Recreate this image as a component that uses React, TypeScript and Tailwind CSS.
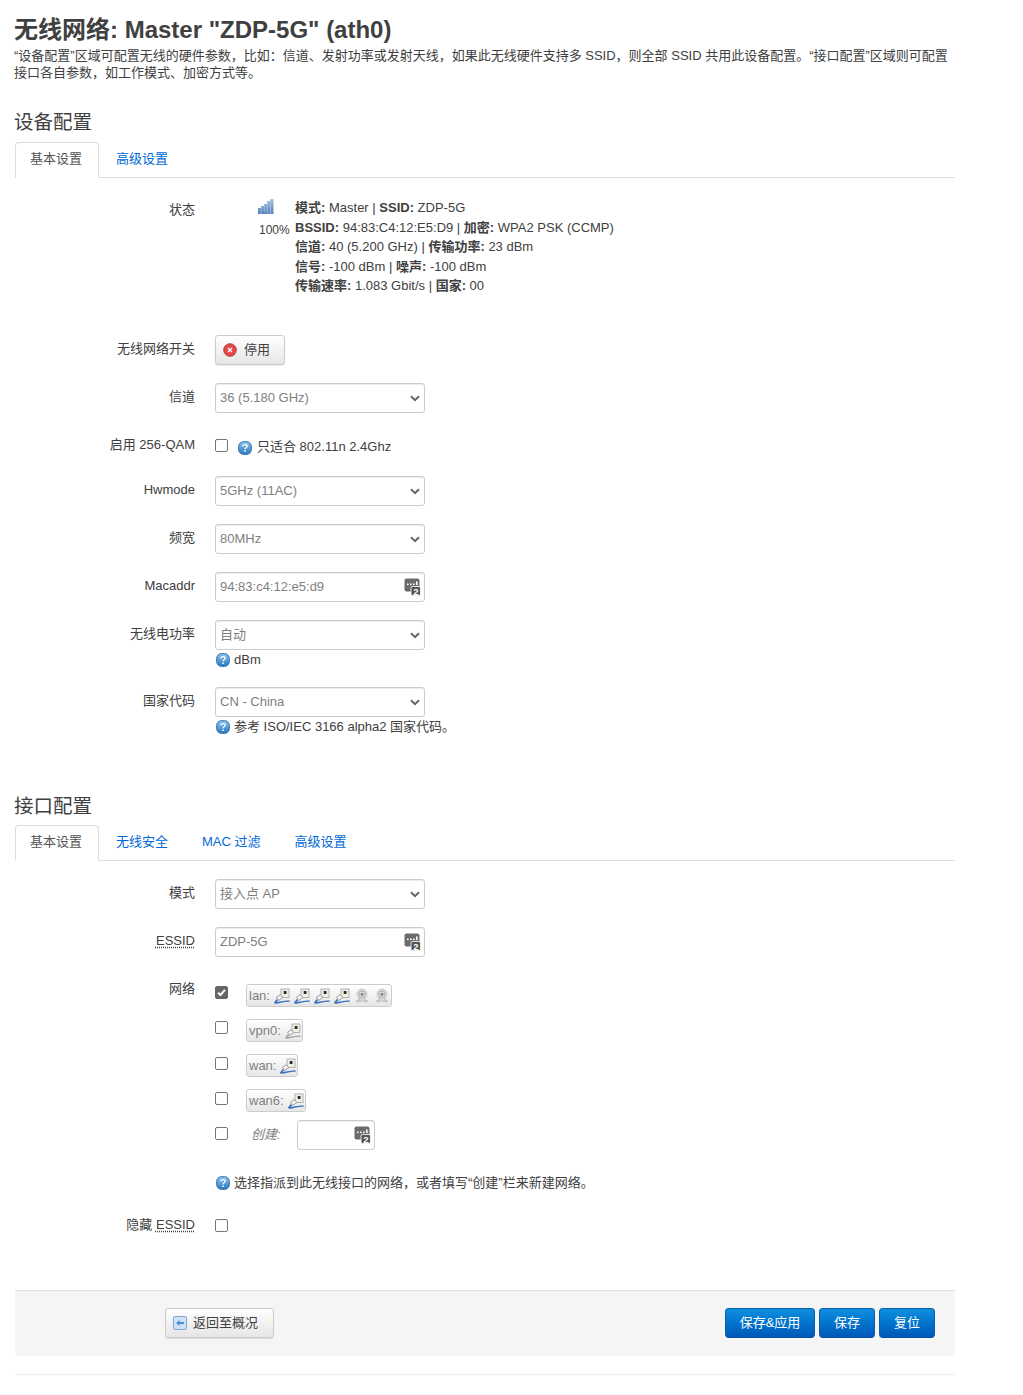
import React from "react";

const FONT = "font-['Liberation_Sans','Noto_Sans_CJK_SC',sans-serif]";

function HelpIcon({ className = "" }: { className?: string }) {
  return (
    <svg width="14" height="14" viewBox="0 0 14 14" className={`shrink-0 ${className}`}>
      <defs>
        <linearGradient id="hg" x1="0" y1="0" x2="0" y2="1">
          <stop offset="0" stopColor="#8cc4ee" />
          <stop offset="1" stopColor="#2a78c0" />
        </linearGradient>
      </defs>
      <rect x="0.6" y="0.6" width="12.8" height="12.8" rx="5" fill="url(#hg)" stroke="#2a6ca8" strokeWidth="0.9" />
      <path d="M4.9 5.5c.1-1.3 1-1.9 2.1-1.9 1.2 0 2.1.7 2.1 1.7 0 1.5-2 1.5-2 2.9" fill="none" stroke="#fff" strokeWidth="1.4" />
      <rect x="6.2" y="9.4" width="1.6" height="1.5" fill="#fff" />
    </svg>
  );
}

function DynIcon({ className = "" }: { className?: string }) {
  return (
    <svg width="17" height="18" viewBox="0 0 17 18" className={className}>
      <rect x="0.5" y="0.5" width="15" height="13" rx="2" fill="#6b6b6b" />
      <rect x="3" y="5.5" width="1.6" height="1.6" fill="#fff" />
      <rect x="6" y="5.5" width="1.6" height="1.6" fill="#fff" />
      <rect x="9" y="5.5" width="1.6" height="1.6" fill="#fff" />
      <rect x="12" y="3.5" width="1.6" height="3.6" fill="#fff" />
      <rect x="7" y="8.5" width="9.5" height="9" rx="1.5" fill="#555" stroke="#fff" strokeWidth="0.8" />
      <text x="11.8" y="16.6" textAnchor="middle" fontSize="9.5" fontWeight="700" fill="#fff" fontFamily="Liberation Sans">2</text>
    </svg>
  );
}

function PortIcon({ grey = false }: { grey?: boolean }) {
  const c = grey ? "#a8a8a8" : "#3f74c4";
  return (
    <svg width="16" height="16" viewBox="0 0 16 16" className="shrink-0">
      <rect x="7" y="1" width="8" height="8.5" fill="#eef0e4" stroke="#a2a2a2" strokeWidth="0.8" />
      <rect x="9.7" y="3" width="2.8" height="3" fill="#2c2c2c" />
      <rect x="3.2" y="7.6" width="4.8" height="3.8" fill="#f6f6f6" stroke="#8e8e8e" strokeWidth="0.8" transform="rotate(-35 5.6 9.5)" />
      <path d="M3.4 11.6 1 14.6c3.2 1 5.4-1.4 14.6-1.6" fill="none" stroke={c} strokeWidth="1.7" />
    </svg>
  );
}

function WifiIcon() {
  return (
    <svg width="16" height="16" viewBox="0 0 16 16" className="shrink-0">
      <circle cx="8" cy="6.2" r="5" fill="#dedede" stroke="#c8c8c8" />
      <circle cx="8" cy="6.2" r="3.2" fill="none" stroke="#aeaeae" />
      <circle cx="8" cy="6.2" r="1.5" fill="#848484" />
      <path d="M6 9.5 3.5 14.5M10 9.5l2.5 5M2 13h12" fill="none" stroke="#b4b4b4" strokeWidth="1.1" />
    </svg>
  );
}

function Chevron() {
  return (
    <svg width="10" height="7" viewBox="0 0 10 7" className="absolute right-[5px] top-[12px] pointer-events-none">
      <path d="M1 1.2 5 5.2 9 1.2" fill="none" stroke="#666" strokeWidth="2" />
    </svg>
  );
}

function Sel({ value }: { value: string }) {
  return (
    <div className="relative w-[210px] h-[30px]">
      <select
        defaultValue={value}
        className="w-full h-full appearance-none bg-white border border-[#ccc] rounded-[3px] pl-1 pr-5 text-[13px] text-[#808080] shadow-[inset_0_1px_1px_rgba(0,0,0,0.075)]"
      >
        <option>{value}</option>
      </select>
      <Chevron />
    </div>
  );
}

function TextInput({ value, w = "w-[210px]" }: { value: string; w?: string }) {
  return (
    <div className={`relative ${w} h-[30px] bg-white border border-[#ccc] rounded-[3px] pl-1 text-[13px] leading-[27px] text-[#808080] shadow-[inset_0_1px_1px_rgba(0,0,0,0.075)]`}>
      {value}
      <DynIcon className="absolute right-[3px] top-[5px]" />
    </div>
  );
}

function Check({ checked = false }: { checked?: boolean }) {
  return (
    <span className={`relative block w-[13px] h-[13px] shrink-0 rounded-[2px] border ${checked ? "bg-[#666] border-[#666]" : "bg-white border-[#767676]"}`}>
      {checked && (
        <svg width="11" height="11" viewBox="0 0 11 11" className="absolute left-0 top-0">
          <path d="M2 5.6 4.4 8 9 2.8" fill="none" stroke="#fff" strokeWidth="2" />
        </svg>
      )}
    </span>
  );
}

function Row({ label, children, className = "", labelClass = "" }: { label: React.ReactNode; children: React.ReactNode; className?: string; labelClass?: string }) {
  return (
    <div className={`flex ${className}`}>
      <div className={`w-[180px] shrink-0 text-right text-[13px] leading-[20px] text-[#404040] pt-1 ${labelClass}`}>{label}</div>
      <div className="ml-5 min-w-0">{children}</div>
    </div>
  );
}

function Tabs({ items }: { items: string[] }) {
  return (
    <div className="flex h-9 mt-2 border-b border-[#ddd] text-[13px]">
      {items.map((t, i) =>
        i === 0 ? (
          <div key={t} className="h-9 pl-[14px] pr-[16px] mr-[2px] border border-[#ddd] border-b-white rounded-t-[4px] bg-white text-[#555] leading-[31px]">
            {t}
          </div>
        ) : (
          <div key={t} className="h-9 pl-[15px] pr-[17px] mr-[2px] text-[#0069d6] leading-[33px]">
            {t}
          </div>
        )
      )}
    </div>
  );
}

function Help({ text, className = "" }: { text: string; className?: string }) {
  return (
    <div className={`flex items-center h-[18px] pt-[2px] pl-px text-[13px] text-[#404040] ${className}`}>
      <HelpIcon />
      <span className="ml-1">{text}</span>
    </div>
  );
}

function NetTag({ label, children, className = "" }: { label: string; children: React.ReactNode; className?: string }) {
  return (
    <div className={`flex items-center h-[23px] pl-[2px] pr-[1px] rounded-[3px] border border-[#ccc] bg-gradient-to-b from-white to-[#e6e6e6] text-[13px] text-[#808080] ${className}`}>
      <span className="mr-1">{label}</span>
      <div className="flex gap-1">{children}</div>
    </div>
  );
}

function NetRow({ checked, children, className = "", boxClass = "mt-[2px]" }: { checked?: boolean; children: React.ReactNode; className?: string; boxClass?: string }) {
  return (
    <div className={`flex items-start h-[23px] ${className}`}>
      <div className={`${boxClass} w-[31px]`}>
        <Check checked={checked} />
      </div>
      {children}
    </div>
  );
}

function StatusLine({ children }: { children: React.ReactNode }) {
  return <div className="h-[19.6px] leading-[19.6px]">{children}</div>;
}

function BlueBtn({ label, w }: { label: string; w: string }) {
  return (
    <button className={`${w} h-[30px] rounded-[4px] border border-[#0a5fae] border-b-[#0050a0] bg-gradient-to-b from-[#0f8fe0] to-[#0058b8] text-white text-[13px] text-center`}>
      {label}
    </button>
  );
}

export default function App() {
  return (
    <div className={`${FONT} w-[1023px] h-[1395px] bg-white px-[15px] pt-[17px] text-[#404040]`}>
      <div className="w-[940px]">
        <h1 className="-ml-px text-[24px] leading-[26px] font-bold text-[#404040]">无线网络: Master "ZDP-5G" (ath0)</h1>
        <p className="-ml-px mt-1 text-[13px] leading-[17px] text-[#404040]">
          “设备配置”区域可配置无线的硬件参数，比如：信道、发射功率或发射天线，如果此无线硬件支持多 SSID，则全部 SSID 共用此设备配置。“接口配置”区域则可配置接口各自参数，如工作模式、加密方式等。
        </p>

        <h3 className="-ml-px mt-[29px] text-[19.5px] leading-6 text-[#404040]">设备配置</h3>
        <Tabs items={["基本设置", "高级设置"]} />

        <Row label="状态" className="mt-5 h-[119px]" labelClass="!pt-[2px]">
          <div className="flex">
            <div className="w-[80px] shrink-0 pl-[43px]">
              <svg width="16" height="16" viewBox="0 0 16 16" className="block">
                <defs>
                  <linearGradient id="sg" x1="0" y1="0" x2="0" y2="1">
                    <stop offset="0" stopColor="#a6c2e2" />
                    <stop offset="1" stopColor="#5584bd" />
                  </linearGradient>
                </defs>
                <path d="M0 10h3V8h3V6h3V3h3V1h3.5v15H0z" fill="url(#sg)" />
                <path d="M3.2 8v8M6.3 6v8M9.4 3v13M12.5 1v15" stroke="#c3d5ea" strokeWidth="0.5" />
              </svg>
              <div className="mt-[9px] ml-px text-[12px] leading-[14px] whitespace-nowrap text-[#404040]">100%</div>
            </div>
            <div className="text-[13px] whitespace-nowrap text-[#404040]">
              <StatusLine><b>模式:</b> Master | <b>SSID:</b> ZDP-5G</StatusLine>
              <StatusLine><b>BSSID:</b> 94:83:C4:12:E5:D9 | <b>加密:</b> WPA2 PSK (CCMP)</StatusLine>
              <StatusLine><b>信道:</b> 40 (5.200 GHz) | <b>传输功率:</b> 23 dBm</StatusLine>
              <StatusLine><b>信号:</b> -100 dBm | <b>噪声:</b> -100 dBm</StatusLine>
              <StatusLine><b>传输速率:</b> 1.083 Gbit/s | <b>国家:</b> 00</StatusLine>
            </div>
          </div>
        </Row>

        <Row label="无线网络开关" className="mt-[18px]">
          <button className="flex items-center w-[70px] h-[30px] pl-[7px] rounded-[3px] border border-[#ccc] bg-gradient-to-b from-white to-[#e6e6e6] shadow-[0_1px_1px_rgba(0,0,0,0.08)] text-[13px] text-[#404040]">
            <svg width="14" height="14" viewBox="0 0 14 14">
              <circle cx="7" cy="7" r="6.3" fill="#e04a4a" stroke="#a82a2a" strokeWidth="0.8" />
              <path d="M5 5l4 4M9 5l-4 4" stroke="#fff" strokeWidth="1.2" />
            </svg>
            <span className="ml-[7px]">停用</span>
          </button>
        </Row>

        <Row label="信道" className="mt-[18px]"><Sel value="36 (5.180 GHz)" /></Row>

        <Row label="启用 256-QAM" className="mt-[18px] h-[27px]">
          <div className="flex items-start pt-2">
            <Check />
            <HelpIcon className="ml-[10px] mt-[2px]" />
            <span className="ml-[5px] text-[13px] leading-[18px] -mt-[1px] text-[#404040] whitespace-nowrap">只适合 802.11n 2.4Ghz</span>
          </div>
        </Row>

        <Row label="Hwmode" className="mt-[18px]"><Sel value="5GHz (11AC)" /></Row>
        <Row label="频宽" className="mt-[18px]"><Sel value="80MHz" /></Row>
        <Row label="Macaddr" className="mt-[18px]"><TextInput value="94:83:c4:12:e5:d9" /></Row>
        <Row label="无线电功率" className="mt-[18px]">
          <Sel value="自动" />
          <Help text="dBm" />
        </Row>
        <Row label="国家代码" className="mt-[19px]">
          <Sel value="CN - China" />
          <Help text="参考 ISO/IEC 3166 alpha2 国家代码。" className="whitespace-nowrap" />
        </Row>

        <h3 className="-ml-px mt-[59px] -mb-px text-[19.5px] leading-6 text-[#404040]">接口配置</h3>
        <Tabs items={["基本设置", "无线安全", "MAC 过滤", "高级设置"]} />

        <Row label="模式" className="mt-[18px]"><Sel value="接入点 AP" /></Row>
        <Row label={<span className="underline decoration-dotted underline-offset-2">ESSID</span>} className="mt-[18px]">
          <TextInput value="ZDP-5G" />
        </Row>
        <Row label="网络" className="mt-[18px]">
          <div className="pt-[9px]">
            <NetRow checked>
              <NetTag label="lan:">
                <PortIcon /><PortIcon /><PortIcon /><PortIcon /><WifiIcon /><WifiIcon />
              </NetTag>
            </NetRow>
            <NetRow className="mt-3">
              <NetTag label="vpn0:"><PortIcon grey /></NetTag>
            </NetRow>
            <NetRow className="mt-3" boxClass="mt-[3px]">
              <NetTag label="wan:"><PortIcon /></NetTag>
            </NetRow>
            <NetRow className="mt-3" boxClass="mt-[3px]">
              <NetTag label="wan6:"><PortIcon /></NetTag>
            </NetRow>
            <div className="flex mt-2 h-[30px]">
              <div className="mt-[7px] w-[36px]"><Check /></div>
              <i className="w-[46px] text-[13px] leading-[30px] text-[#808080]">创建:</i>
              <TextInput value="" w="w-[78px]" />
            </div>
            <Help text="选择指派到此无线接口的网络，或者填写“创建”栏来新建网络。" className="mt-[23px] whitespace-nowrap" />
          </div>
        </Row>
        <Row label={<>隐藏 <span className="underline decoration-dotted underline-offset-2">ESSID</span></>} className="mt-[20px]" labelClass="">
          <div className="pt-2"><Check /></div>
        </Row>

        <div className="mt-[55px] h-[66px] flex items-start justify-between bg-[#f5f5f5] border-t border-[#ddd] rounded-b-[3px] pt-[17px] pl-[150px] pr-5">
          <button className="flex items-center w-[109px] h-[30px] pl-[7px] rounded-[3px] border border-[#ccc] bg-gradient-to-b from-white to-[#e6e6e6] shadow-[0_1px_1px_rgba(0,0,0,0.1)] text-[13px] text-[#404040]">
            <svg width="14" height="14" viewBox="0 0 14 14">
              <rect x="0.5" y="0.5" width="13" height="13" rx="1.5" fill="#cfe2f5" stroke="#7fa6cf" />
              <path d="M3 7l3.5-3v2h4.5v2h-4.5v2z" fill="#4a90d0" />
            </svg>
            <span className="ml-[6px] whitespace-nowrap">返回至概况</span>
          </button>
          <div className="flex gap-1">
            <BlueBtn label="保存&应用" w="w-[90px]" />
            <BlueBtn label="保存" w="w-[56px]" />
            <BlueBtn label="复位" w="w-[56px]" />
          </div>
        </div>

        <div className="mt-[18px] h-px bg-[#eee]" />
      </div>
    </div>
  );
}
